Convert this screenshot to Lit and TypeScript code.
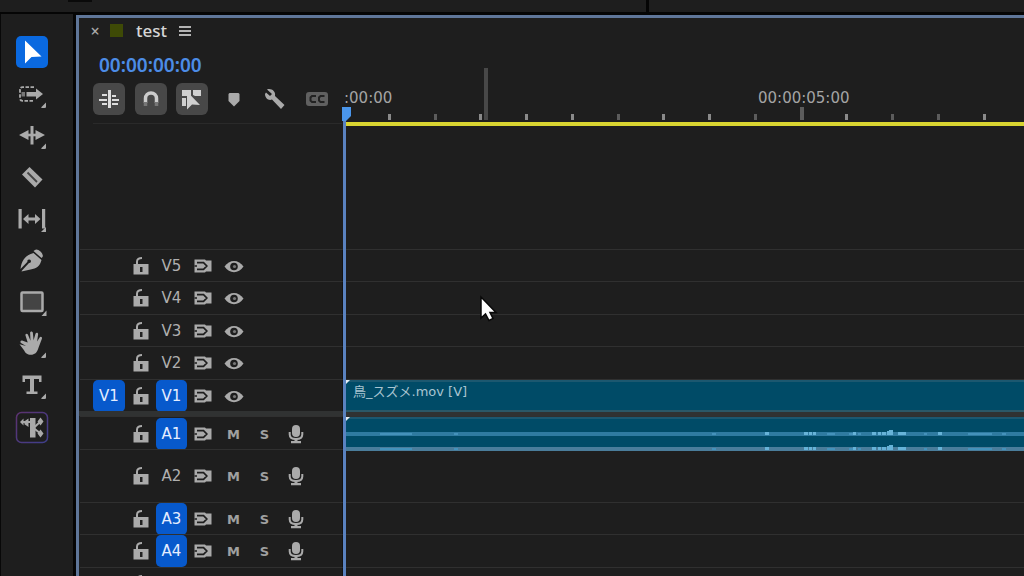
import { LitElement, html, css, svg, nothing } from "lit";
import { customElement, property, state } from "lit/decorators.js";
import { classMap } from "lit/directives/class-map.js";

interface Track {
  name: string;
  kind: "video" | "audio" | "mix";
  targeted: boolean;
  source?: string;
  clip?: string;
}

const VIDEO: Track[] = [
  { name: "V5", kind: "video", targeted: false },
  { name: "V4", kind: "video", targeted: false },
  { name: "V3", kind: "video", targeted: false },
  { name: "V2", kind: "video", targeted: false },
  { name: "V1", kind: "video", targeted: true, source: "V1", clip: "鳥_スズメ.mov [V]" },
];

const AUDIO: Track[] = [
  { name: "A1", kind: "audio", targeted: true, clip: "" },
  { name: "A2", kind: "audio", targeted: false },
  { name: "A3", kind: "audio", targeted: true },
  { name: "A4", kind: "audio", targeted: true },
  { name: "", kind: "mix", targeted: false },
];

/* Peaks of the waveform: [start, width, height] along the clip. */
const PEAKS: number[][] = [
  [36, 32, 1], [110, 4, 1], [368, 4, 1], [421, 4, 2], [460, 4, 2], [465, 3, 2], [469, 3, 2],
  [483, 8, 1], [505, 4, 1], [509, 3, 2], [514, 3, 1], [528, 4, 2], [534, 3, 2], [538, 4, 2],
  [543, 3, 3], [545, 4, 4], [554, 8, 2], [580, 3, 1], [594, 4, 2], [624, 24, 1], [658, 4, 1],
];

const corner = svg`<path d="M36 28.500v5q-3 1-5 0z"/>`;

const TOOLS: { label: string; art: unknown }[] = [
  { label: "Selection", art: svg`<path d="M15 8.500v23l6.500-6.500 10-.5z" fill="#fff"/>` },
  {
    label: "Track select forward",
    art: svg`<path d="M24 13.200H12.500q-2.500 0-2.500 2.500v8.600q0 2.500 2.500 2.500H24" fill="none" stroke="#aaa" stroke-width="1.800" stroke-dasharray="3.500 1.500"/><path d="M11.500 18h3.500v4.500h-3.500z" fill="#777"/><path d="M16.500 18H26v-3.500l7 5.500-7 5.500V22.500h-9.500z"/>${corner}`,
  },
  {
    label: "Ripple edit",
    art: svg`<path d="M20.500 11h3v18.500h-3zM18.500 15v10L9 20zM25.500 15v10L35 20z"/><path d="M14 18.700h16v2.600H14z"/>${corner}`,
  },
  {
    label: "Razor",
    art: svg`<path d="M12 17.500l7.500-7.500L32.500 22.500 25 30.500z"/><path d="M17.500 15.500l9.500 9.500" stroke="#444" stroke-width="1.800"/>`,
  },
  {
    label: "Slip",
    art: svg`<path d="M8.500 10h3.200v19.500H8.500zM32 10h3.200v19.500H32zM13 20l5.500-5v3.500h6.500V15l5.500 5-5.500 5v-3.500h-6.500V25z"/><path d="M36 28v5h-5z"/>`,
  },
  {
    label: "Pen",
    art: svg`<path d="M23.500 13l8 7c-1.500 6-5 8.500-11 9.500l-9 2 .5-1 7-7.500a1.800 1.800 0 1 0-1.500-1.200l-7 7.200c1-9 5.500-14 13-16z"/><path d="M25 10c2-2.500 9.500 3.500 7.500 7l-1 1-8-7z"/>`,
  },
  {
    label: "Rectangle",
    art: svg`<rect x="11.500" y="10.500" width="21" height="18.500" rx="1" fill="#444" stroke="#aaa" stroke-width="2.500"/><path d="M36.500 28.500v5.500h-5z"/>`,
  },
  {
    label: "Hand",
    art: svg`<path d="M16 22l-5-3c-1.500-1-.2-3 1.700-2.300l5 1.800-2.200-7c-.6-2 1.800-2.600 2.500-.8l2.500 6-.4-7.700c0-2 2.600-2 2.800 0l.7 7.300 1.900-6.500c.6-1.800 3-1.200 2.600.7l-1 7 2.500-4c1-1.500 3-.3 2.300 1.300l-3.400 9c-1.500 5-4 7-7.500 7-4 0-5.500-1.600-7-4.500l-4.500-6z"/>${corner}`,
  },
  {
    label: "Type",
    art: svg`<path d="M12.500 10.500h19v6.500h-2.500v-3h-5v12.500h3.500V29h-11v-2.500H20V14h-5v3h-2.500z"/>${corner}`,
  },
  {
    label: "Remix",
    art: svg`<rect x="6.500" y="5.500" width="31" height="30" rx="5" fill="none" stroke="url(#g)" stroke-width="1.500"/><defs><linearGradient id="g" x1="0" y1="0" x2="1" y2="1"><stop offset="0" stop-color="#5c3270"/><stop offset="1" stop-color="#3f3f8c"/></linearGradient></defs><path d="M20 11h5.500v19.500H20zM18.500 11.500v8.500l-4-2.700v-3zM10 15l3.500-3.500v7zM30.500 10.500l3 4-3 4-3-4zM30.500 22.500l3 4-3 4-3-4z"/><path d="M12 15h8.500M30.500 14.500L23.500 21l7 5.500" fill="none" stroke="#aaa" stroke-width="2"/>`,
  },
];

const icons = {
  lock: svg`<path d="M2.500 8h15v10.500h-15z"/><path d="M6 8.500V5.800C6 3.200 8 2 11 2" fill="none" stroke="#aaa" stroke-width="2"/><path d="M9 11h2.500v5H9z" fill="#222"/>`,
  sync: svg`<path d="M1.500 3.500H12l1 1h5.500v11H13l-1 1H1.500z"/><path d="M4 6.700h6.500l3.300 3.300-3.300 3.300H4M1.500 10H4" fill="none" stroke="#1e1e1e" stroke-width="1.700"/>`,
  eye: svg`<path d="M.5 10.500c5-7.500 14-7.500 19 0-5 7.500-14 7.500-19 0z"/><circle cx="10" cy="10.500" r="3.800" fill="#1e1e1e"/><circle cx="10.500" cy="10.500" r="1.600" fill="#777"/>`,
  mic: svg`<rect x="6" y="1" width="8" height="12" rx="4"/><path d="M3.700 8v2.500c0 3.500 3 4.500 6.300 4.500s6.300-1 6.300-4.500V8" fill="none" stroke="#aaa" stroke-width="2"/><path d="M8.500 14h3v3H15v2.300H5V17h3.500z"/>`,
};

const icon = (art: unknown) => html`<svg viewBox="0 0 20 20" width="20" height="20" fill="#aaa" aria-hidden="true">${art}</svg>`;

const reset = css`
  * { box-sizing: border-box; }
  button {
    appearance: none;
    border: 0;
    margin: 0;
    padding: 0;
    background: none;
    color: inherit;
    font: inherit;
    display: flex;
    align-items: center;
    justify-content: center;
  }
  svg { display: block; flex: none; }
`;

@customElement("tool-rail")
class ToolRail extends LitElement {
  @state() private active = "Selection";

  static styles = [reset, css`
    :host { display: block; background: #1e1e1e; border-left: 1px solid #080808; padding: 22px 0 0 15px; }
    .tools { display: flex; flex-direction: column; justify-content: space-between; height: 407px; }
    .tool { width: 32px; height: 32px; border-radius: 5px; }
    .tool svg { overflow: visible; }
    .active { background: #0a69e0; }
  `];

  render() {
    return html`<div class="tools" role="toolbar" aria-label="Tools">
      ${TOOLS.map((t) => html`
        <button class=${classMap({ tool: true, active: t.label === this.active })} aria-label=${t.label}
          @click=${() => (this.active = t.label)}>
          <svg viewBox="6 4 32 32" width="32" height="32" fill="#aaa" aria-hidden="true">${t.art}</svg>
        </button>`)}
    </div>`;
  }
}

@customElement("track-row")
class TrackRow extends LitElement {
  @property({ attribute: false }) track!: Track;

  static styles = [reset, css`
    :host { display: grid; grid-template-columns: 264px minmax(0, 1fr); min-height: 0; }
    .head {
      display: grid;
      grid-template-columns: 32px repeat(6, 31px);
      align-items: center;
      padding-left: 13px;
      border-top: 1px solid #303030;
      border-right: 2px solid #131313;
      font-size: 15px;
      color: #b0b0b0;
    }
    button { height: 32px; }
    .on { background: #0759cc; color: #e4edff; border-radius: 5px; }
    .letter { font-size: 13px; font-weight: bold; color: #a0a0a0; }
    .lane { border-top: 1px solid #303030; }
    .clip { height: 100%; background: #004b67; border-top: 2px solid #1c5870; position: relative; }
    .video { border-bottom: 2px solid #2b5867; }
    .fx { position: absolute; left: 0; top: -2px; width: 6px; height: 6px; background: #e6eef4; clip-path: polygon(0 0, 100% 0, 0 100%); }
    .name { padding-left: 9px; font-size: 13px; line-height: 19px; color: #a9c5d1; white-space: nowrap; }
    .wave { width: 100%; height: 100%; }
  `];

  private wave() {
    return html`<svg class="wave" viewBox="0 0 680 32" preserveAspectRatio="xMinYMin slice" aria-hidden="true">
      ${[15, 30].map((y) => svg`
        <rect x="0" y=${y - 2} width="4000" height="4" fill=${y > 20 ? "#4a7d9b" : "#2f7ba1"} />
        ${PEAKS.map(([x, w, h]) => svg`<rect x=${x} y=${y - h} width=${w} height=${h + 1} fill=${h > 1 ? "#67b3d8" : "#4492bb"} />`)}`)}
    </svg>`;
  }

  render() {
    const t = this.track;
    const audio = t.kind === "audio";
    return html`
      <div class="head">
        ${t.source ? html`<button class="on" aria-label="Source ${t.source}">${t.source}</button>` : html`<span></span>`}
        <button aria-label="Lock ${t.name}">${icon(icons.lock)}</button>
        ${t.kind === "mix" ? nothing : html`
          <button class=${classMap({ on: t.targeted })} aria-label="Target ${t.name}">${t.name}</button>
          <button aria-label="Sync lock ${t.name}">${icon(icons.sync)}</button>
          ${audio
            ? html`
              <button class="letter" aria-label="Mute ${t.name}">M</button>
              <button class="letter" aria-label="Solo ${t.name}">S</button>
              <button aria-label="Record ${t.name}">${icon(icons.mic)}</button>`
            : html`<button aria-label="Show ${t.name}">${icon(icons.eye)}</button>`}`}
      </div>
      <div class="lane">
        ${t.clip === undefined ? nothing : html`
          <div class=${classMap({ clip: true, video: !audio })}>
            <span class="fx"></span>
            ${audio ? this.wave() : html`<div class="name">${t.clip}</div>`}
          </div>`}
      </div>`;
  }
}

@customElement("time-ruler")
class TimeRuler extends LitElement {
  static styles = [reset, css`
    :host { display: block; position: relative; border-bottom: 4px solid #d9d431; color: #a4a4a4; font-size: 15px; overflow: hidden; }
    .marks { position: absolute; left: 0; top: 0; }
    .time { position: absolute; top: 71px; line-height: 18px; white-space: nowrap; }
    .first { left: 0; }
    .fifth { left: 414px; }
  `];

  render() {
    const ticks = Array.from({ length: 80 }, (_, i) => i + 1);
    return html`
      <svg class="marks" width="4000" height="104" aria-hidden="true">
        <rect x="140" y="50" width="4" height="52" fill="#484848" />
        ${ticks.map((i) => {
          const major = i % 10 === 0;
          const soft = [2, 6, 9].includes(i % 10) || i === 13;
          return svg`<rect x=${Math.round(i * 45.75) - 2} y=${major ? 89 : 96} width=${major ? 4 : 3} height=${major ? 13 : 6} fill=${major || soft ? "#5c5c5c" : "#8a8a8a"} />`;
        })}
      </svg>
      <span class="time first">:00:00</span>
      <span class="time fifth">00:00:05:00</span>`;
  }
}

@customElement("app-root")
class AppRoot extends LitElement {
  static styles = [reset, css`
    :host {
      display: grid;
      grid-template-rows: 12px minmax(0, 1fr);
      row-gap: 2px;
      height: 100vh;
      overflow: hidden;
      background: #050505;
      font-family: "DejaVu Sans", "Noto Sans CJK JP", sans-serif;
      color: #d0d0d0;
      cursor: default;
    }
    .upper { display: grid; grid-template-columns: 646px 1fr; column-gap: 3px; }
    .upper > div { background: #1e1e1e; }
    .scroll { width: 24px; height: 2px; margin-left: 68px; background: #0a0a0a; }
    .work { display: grid; grid-template-columns: 73px minmax(0, 1fr); column-gap: 3px; min-height: 0; }
    .panel { position: relative; margin-top: 1px; background: #1e1e1e; border: solid #5f7699; border-width: 3px 0 0 3px; min-height: 0; overflow: hidden; }
    .top { display: grid; grid-template-columns: 265px minmax(0, 1fr); }
    .bar { display: flex; flex-direction: column; padding-left: 14px; height: 108px; }
    .tab { display: flex; align-items: center; height: 25px; font: 500 17px "Noto Sans", sans-serif; color: #d6d6d6; }
    .close { width: 4px; font-size: 16px; color: #aaa; }
    .swatch { width: 13px; height: 13px; margin: 0 13px; background: #3e4a06; }
    .menu { margin-left: 12px; }
    .code { align-self: flex-start; margin-left: 6px; height: 43px; font: 600 19px "Noto Sans", sans-serif; color: #4c8ce6; }
    .controls { display: flex; justify-content: space-between; width: 240px; margin-top: -3px; }
    .controls button { width: 32px; height: 32px; border-radius: 6px; }
    .controls .set { background: #484848; }
    .rule { height: 1px; margin: 8px 2px 0 0; background: #2a2a2a; }
    .tracks { display: grid; margin-top: 123px; }
    .video { display: grid; grid-template-rows: 32px 33px 32px 33px 32px; padding-left: 1px; }
    .split { height: 5px; background: #303232; }
    .audio { display: grid; grid-template-rows: 33px 53px 32px 33px 33px; padding-left: 1px; }
    .playhead { position: absolute; left: 263px; top: 88px; bottom: 0; width: 12px; }
    .pointer { position: absolute; left: 400px; top: 276px; }
  `];

  render() {
    return html`
      <div class="upper"><div><div class="scroll"></div></div><div></div></div>
      <div class="work">
        <tool-rail></tool-rail>
        <section class="panel" aria-label="Timeline">
          <div class="top">
            <div class="bar">
              <div class="tab">
                <button class="close" aria-label="Close test">×</button>
                <span class="swatch"></span>
                <span>test</span>
                <button class="menu" aria-label="Panel menu">
                  <svg width="12" height="12" viewBox="0 0 12 12" aria-hidden="true"><path d="M0 2h12M0 6h12M0 10h12" stroke="#b4b4b4" stroke-width="2"/></svg>
                </button>
              </div>
              <button class="code" aria-label="Playhead position">00:00:00:00</button>
              <div class="controls">
                <button class="set" aria-label="Insert as nests">
                  <svg width="24" height="24" fill="#ddd" aria-hidden="true"><path d="M11 3h3v18h-3zM5 7h5v2H5zM2 12h8v2H2zM5 16h5v2H5zM15 8h4v2h-4zM15 12h7v2h-7zM15 16h6v2h-6z"/></svg>
                </button>
                <button class="set" aria-label="Snap">
                  <svg width="24" height="24" fill="none" stroke-width="3.500" aria-hidden="true"><path d="M6.500 16v-4.500a5.500 5.500 0 0 1 11 0V16" stroke="#ccc"/><path d="M6.500 15v4M17.500 15v4" stroke="#777"/></svg>
                </button>
                <button class="set" aria-label="Linked selection">
                  <svg width="26" height="24" fill="#d0d0d0" aria-hidden="true"><path d="M3 3h9v6H3zM14 3h8v6h-6l-2-1zM3 11h4v8H3z"/><path d="M8 4.500v18l5-5 8 .5z"/></svg>
                </button>
                <button aria-label="Add marker">
                  <svg width="20" height="20" fill="#aaa" aria-hidden="true"><path d="M4.500 5l1-1h9l1 1v7L10 17.500 4.500 12z"/></svg>
                </button>
                <button aria-label="Timeline settings">
                  <svg width="22" height="22" fill="#aaa" aria-hidden="true"><path d="M3 1.500c4-1.500 9 1.500 8 6.500l9.500 9-3.500 4-9-9.500C4.500 13 1 10 1 6l1-1.500 4 3.500 2-2z"/></svg>
                </button>
                <button aria-label="Captions">
                  <svg width="22" height="16" viewBox="0 0 22 16" aria-hidden="true"><rect width="22" height="14" y="1" rx="3" fill="#606060"/><path d="M10 5h-4L4.500 6.500v3L6 11h4M18.500 5h-4L13 6.500v3l1.500 1.500h4" fill="none" stroke="#222" stroke-width="2"/></svg>
                </button>
              </div>
              <div class="rule"></div>
            </div>
            <time-ruler></time-ruler>
          </div>
          <div class="tracks">
            <div class="video">${VIDEO.map((t) => html`<track-row .track=${t}></track-row>`)}</div>
            <div class="split"></div>
            <div class="audio">${AUDIO.map((t) => html`<track-row .track=${t}></track-row>`)}</div>
          </div>
          <svg class="playhead" height="100%" aria-hidden="true">
            <rect x="1" y="14" width="3" height="1000" fill="#5a82c0"/><path d="M0 1h9v9l-5 5H0z" fill="#4a96ec"/>
          </svg>
          <svg class="pointer" width="20" height="30" aria-hidden="true"><path d="M2 3v21l4.500-4 3.500 6.500 4-2-3-6h6z" fill="#fff" stroke="#080808" stroke-width="1.500"/></svg>
        </section>
      </div>`;
  }
}
